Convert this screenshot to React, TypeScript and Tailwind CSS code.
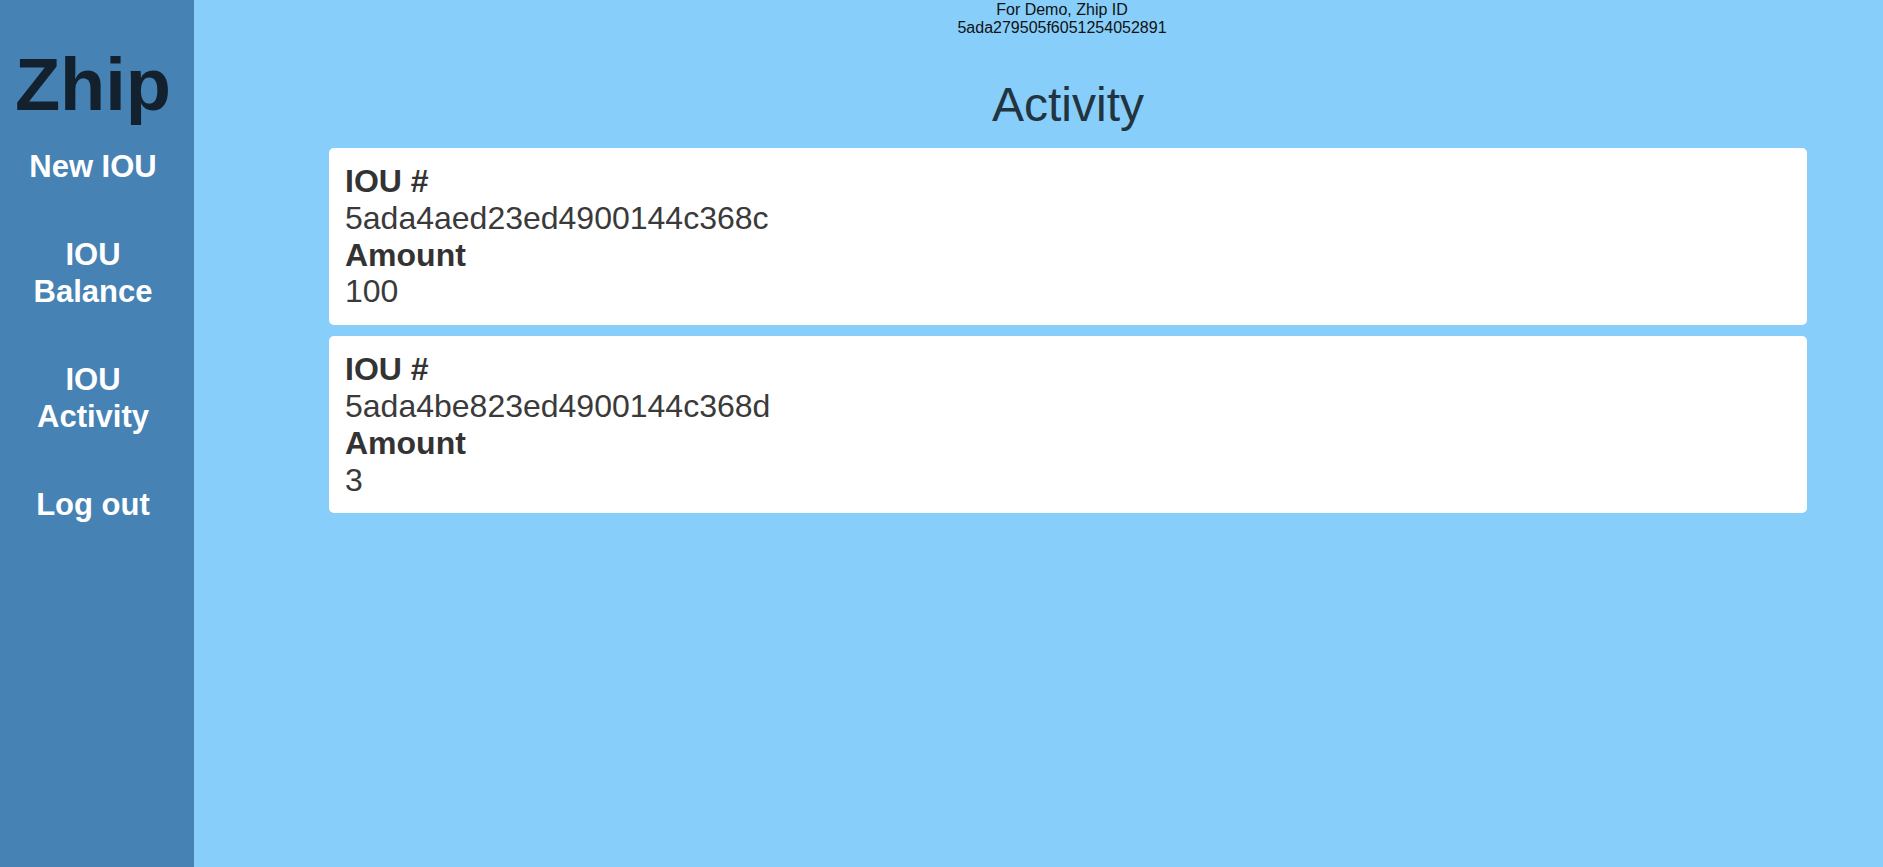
const ious = [
  { id: '5ada4aed23ed4900144c368c', amount: 100 },
  { id: '5ada4be823ed4900144c368d', amount: 3 },
];

const navItems = [['New IOU'], ['IOU', 'Balance'], ['IOU', 'Activity'], ['Log out']];

export default function App() {
  return (
    <div className="flex min-h-[867px] font-['Liberation_Sans',Arial,sans-serif]">
      <aside className="w-[194px] shrink-0 bg-[#4682b4] pr-2 pt-[42px] text-center">
        <h1 className="text-[74px] font-bold leading-[86px] text-[#13202d]">Zhip</h1>
        <nav className="mt-[20px] flex flex-col gap-[50px]">
          {navItems.map((lines, i) => (
            <a key={i} href="#" className="block text-[31px] font-bold leading-[37.5px] text-white">
              {lines.map((l, j) => (
                <div key={j}>{l}</div>
              ))}
            </a>
          ))}
        </nav>
      </aside>

      <main className="flex-1 bg-[#87cefa] pl-[59px]">
        <div className="pr-[12px] pt-[1px] text-center text-[16px] leading-[18px] text-[#111]">
          <div>For Demo, Zhip ID</div>
          <div>5ada279505f6051254052891</div>
        </div>
        <h2 className="mt-[40px] text-center text-[48px] leading-[55px] text-[#22343f]">Activity</h2>
        <div className="mx-[76px] mt-[16px] flex flex-col gap-[11px]">
          {ious.map((iou) => (
            <div key={iou.id} className="rounded-[5px] bg-white px-4 py-[15px] text-[32px] leading-[36.8px] text-[#3a3a3a]">
              <div className="font-bold text-[#333]">IOU #</div>
              <div>{iou.id}</div>
              <div className="font-bold text-[#333]">Amount</div>
              <div>{iou.amount}</div>
            </div>
          ))}
        </div>
      </main>
    </div>
  );
}
